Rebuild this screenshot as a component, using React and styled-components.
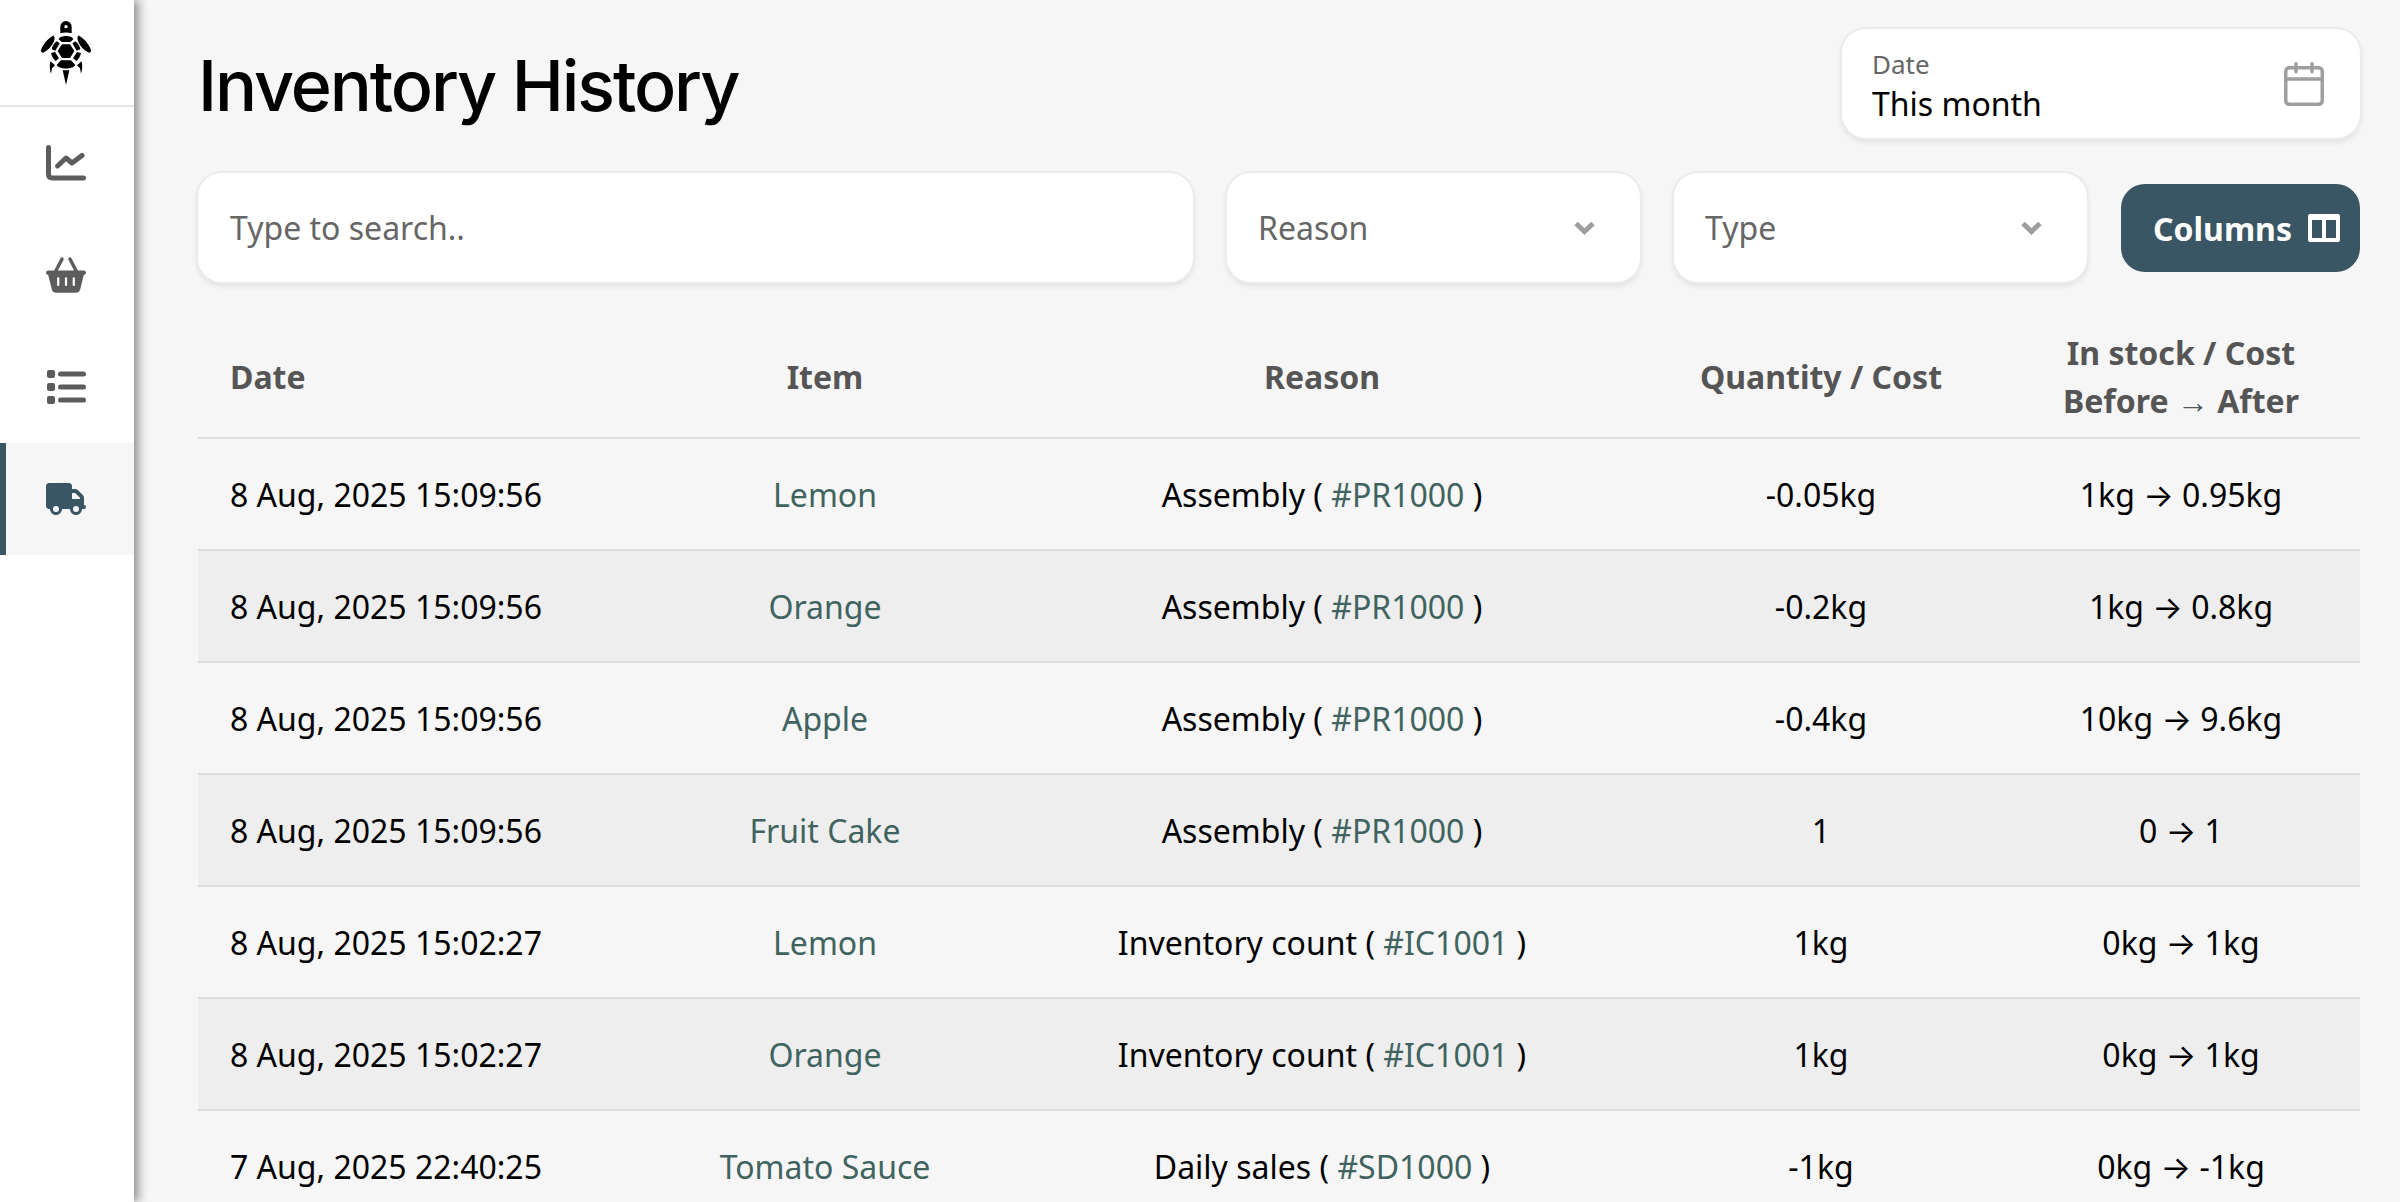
import React from "react";
import styled, { createGlobalStyle } from "styled-components";
import { FaBasketShopping, FaTruck } from "react-icons/fa6";

const GlobalStyle = createGlobalStyle`
  html, body {
    margin: 0;
    height: 100%;
    overflow: hidden;
    background: #f6f6f6;
    font-family: "Noto Sans", sans-serif;
  }
  * { box-sizing: border-box; }
`;

const Layout = styled.div`
  display: flex;
  height: 100vh;
  overflow: hidden;
`;

const Sidebar = styled.nav`
  flex: 0 0 134px;
  background: #fff;
  box-shadow: 4px 0 10px rgba(0, 0, 0, 0.45);
  z-index: 1;
`;

const LogoBox = styled.div`
  height: 107px;
  padding-right: 2px;
  display: flex;
  align-items: center;
  justify-content: center;
  border-bottom: 2px solid #e6e6e6;
`;

const NavItem = styled.div`
  height: 112px;
  display: flex;
  align-items: center;
  justify-content: center;
  font-size: 40px;
  color: ${({ $active }) => ($active ? "#3a5664" : "#5c5c5c")};
  background: ${({ $active }) => ($active ? "#f6f6f6" : "transparent")};
  border-left: ${({ $active }) => ($active ? "6px solid #3a5664" : "0")};
  padding-right: ${({ $active }) => ($active ? "8px" : "2px")};
`;

const Main = styled.main`
  flex: 1;
  min-width: 0;
  padding: 29px 40px 0 64px;
`;

const Header = styled.header`
  display: flex;
  justify-content: space-between;
  align-items: center;
  height: 109px;
`;

const Title = styled.h1`
  margin: 4px 0 0;
  font-family: "Inter", sans-serif;
  font-size: 70px;
  font-weight: 450;
  letter-spacing: -0.03em;
  color: #000;
`;

const Card = styled.div`
  background: #fff;
  border-radius: 24px;
  box-shadow: 0 0 0 2px #ebebeb, 0 3px 6px rgba(0, 0, 0, 0.12);
`;

const DateCard = styled(Card)`
  width: 518px;
  height: 109px;
  padding: 0 36px 0 30px;
  display: flex;
  align-items: center;
  justify-content: space-between;
`;

const DateText = styled.div`
  padding-top: 5px;
`;

const DateLabel = styled.div`
  font-size: 26px;
  line-height: 34px;
  color: #666;
`;

const DateValue = styled.div`
  font-size: 32px;
  line-height: 45px;
  color: #000;
`;

const Filters = styled.div`
  display: flex;
  align-items: flex-start;
  gap: 34px;
  margin-top: 35px;
`;

const Search = styled(Card)`
  flex: 1;
  height: 109px;
  padding: 0 32px;
  display: flex;
  align-items: center;
  font-size: 32px;
  color: #666;
`;

const Select = styled(Card)`
  flex: 0 0 413px;
  height: 109px;
  padding: 0 45px 0 31px;
  display: flex;
  align-items: center;
  justify-content: space-between;
  font-size: 32px;
  color: #666;
`;

const ColumnsButton = styled.button`
  flex: 0 0 239px;
  height: 88px;
  margin-top: 11px;
  border: 0;
  border-radius: 24px;
  background: #3a5664;
  color: #fff;
  font-family: inherit;
  font-size: 32px;
  font-weight: 700;
  display: flex;
  align-items: center;
  justify-content: space-between;
  padding: 0 20px 0 32px;
`;

const Table = styled.table`
  width: 100%;
  margin-top: 34px;
  border-collapse: collapse;
  table-layout: fixed;
`;

const Th = styled.th`
  height: 122px;
  padding: 0 32px;
  font-size: 32px;
  line-height: 48px;
  font-weight: 700;
  color: #555;
  text-align: ${({ $left }) => ($left ? "left" : "center")};
  border-bottom: 2px solid #ddd;
`;

const Row = styled.tr`
  background: ${({ $alt }) => ($alt ? "#eeeeee" : "transparent")};
`;

const Td = styled.td`
  height: 112px;
  padding: 0 32px;
  font-size: 32px;
  color: #000;
  text-align: ${({ $left }) => ($left ? "left" : "center")};
  border-bottom: 2px solid #ddd;
`;

const ItemLink = styled.span`
  color: #3f6460;
`;

const Arrow = styled.span`
  font-family: "Inter", sans-serif;
`;

// turtle traced from the logo, top view
const Turtle = () => (
  <svg width="50" height="64" viewBox="0 0 150 192" fill="#000">
    <path fillRule="evenodd" d="M58 37V17a17 17 0 0 1 34 0v20c-10-3-24-3-34 0zM75 12a5 5 0 1 0 0 10 5 5 0 0 0 0-10z" />
    <path d="M53 55c4-13 40-13 44 0l-9 8H62z" />
    <path d="M63 70h24l13 20-13 21H63L50 90z" />
    <path d="M47 61l9 6-13 22-11-4c1-9 8-19 15-24z" />
    <path d="M103 61l-9 6 13 22 11-4c-1-9-8-19-15-24z" />
    <path d="M30 96l12-3 12 19-10 8c-7-5-12-15-14-24z" />
    <path d="M120 96l-12-3-12 19 10 8c7-5 12-15 14-24z" />
    <path d="M60 118h30l13 14c-8 14-48 14-56 0z" />
    <path d="M36 44C20 52 4 72 0 88c0 7 6 9 10 5 14-7 26-22 30-36 2-7-1-15-4-13z" />
    <path d="M114 44c16 8 32 28 36 44 0 7-6 9-10 5-14-7-26-22-30-36-2-7 1-15 4-13z" />
    <path d="M28 121l14 12-9 9-3 16c-4-11-5-24-2-37z" />
    <path d="M122 121l-14 12 9 9 3 16c4-11 5-24 2-37z" />
    <path d="M65 148h20l-10 44z" />
  </svg>
);

const ChartIcon = () => (
  <svg width="40" height="36" viewBox="0 0 40 36" fill="none" stroke="currentColor" strokeWidth="5" strokeLinecap="round" strokeLinejoin="round">
    <path d="M2.500 2.500V29q0 4 4 4H37.500" />
    <path d="M11.500 21L20 13l6 5L36 10.500" />
  </svg>
);

const ListIcon = () => (
  <svg width="40" height="34" viewBox="0 0 40 34" fill="currentColor">
    <rect x="1" y="0" width="8" height="8" rx="2" />
    <rect x="1" y="13" width="8" height="8" rx="2" />
    <rect x="1" y="26" width="8" height="8" rx="2" />
    <rect x="12" y="1.500" width="28" height="5" rx="2.500" />
    <rect x="12" y="14.500" width="28" height="5" rx="2.500" />
    <rect x="12" y="27.500" width="28" height="5" rx="2.500" />
  </svg>
);

const CalendarIcon = () => (
  <svg width="40" height="44" viewBox="0 0 40 44" fill="none" stroke="#9e9e9e" strokeWidth="3.500" strokeLinecap="round">
    <rect x="1.750" y="5.750" width="36.500" height="36.500" rx="3.500" />
    <path d="M1.750 17h36.500M12 1.750v8M28 1.750v8" />
  </svg>
);

const ChevronIcon = () => (
  <svg width="21" height="14" viewBox="0 0 21 14" fill="none" stroke="#9e9e9e" strokeWidth="5">
    <path d="M2 2.500l8.500 8 8.500-8" />
  </svg>
);

const ColumnsIcon = () => (
  <svg width="32" height="28" viewBox="0 0 32 28">
    <path fill="#fff" fillRule="evenodd" d="M2 0h28a2 2 0 0 1 2 2v24a2 2 0 0 1-2 2H2a2 2 0 0 1-2-2V2a2 2 0 0 1 2-2zM4 6v18h10V6zM18 6v18h10V6z" />
  </svg>
);

const rows = [
  ["8 Aug, 2025 15:09:56", "Lemon", "Assembly", "#PR1000", "-0.05kg", "1kg", "0.95kg"],
  ["8 Aug, 2025 15:09:56", "Orange", "Assembly", "#PR1000", "-0.2kg", "1kg", "0.8kg"],
  ["8 Aug, 2025 15:09:56", "Apple", "Assembly", "#PR1000", "-0.4kg", "10kg", "9.6kg"],
  ["8 Aug, 2025 15:09:56", "Fruit Cake", "Assembly", "#PR1000", "1", "0", "1"],
  ["8 Aug, 2025 15:02:27", "Lemon", "Inventory count", "#IC1001", "1kg", "0kg", "1kg"],
  ["8 Aug, 2025 15:02:27", "Orange", "Inventory count", "#IC1001", "1kg", "0kg", "1kg"],
  ["7 Aug, 2025 22:40:25", "Tomato Sauce", "Daily sales", "#SD1000", "-1kg", "0kg", "-1kg"],
];

export default function App() {
  return (
    <Layout>
      <GlobalStyle />
      <Sidebar>
        <LogoBox>
          <Turtle />
        </LogoBox>
        <NavItem><ChartIcon /></NavItem>
        <NavItem><FaBasketShopping /></NavItem>
        <NavItem><ListIcon /></NavItem>
        <NavItem $active><FaTruck /></NavItem>
      </Sidebar>
      <Main>
        <Header>
          <Title>Inventory History</Title>
          <DateCard>
            <DateText>
              <DateLabel>Date</DateLabel>
              <DateValue>This month</DateValue>
            </DateText>
            <CalendarIcon />
          </DateCard>
        </Header>
        <Filters>
          <Search>Type to search..</Search>
          <Select>Reason<ChevronIcon /></Select>
          <Select>Type<ChevronIcon /></Select>
          <ColumnsButton>Columns<ColumnsIcon /></ColumnsButton>
        </Filters>
        <Table>
          <colgroup>
            <col width="448" />
            <col width="358" />
            <col width="636" />
            <col width="362" />
            <col width="358" />
          </colgroup>
          <thead>
            <tr>
              <Th $left>Date</Th>
              <Th>Item</Th>
              <Th>Reason</Th>
              <Th>Quantity / Cost</Th>
              <Th>In stock / Cost<br />Before → After</Th>
            </tr>
          </thead>
          <tbody>
            {rows.map((row, index) => (
              <Row key={index} $alt={index % 2 === 1}>
                <Td $left>{row[0]}</Td>
                <Td><ItemLink>{row[1]}</ItemLink></Td>
                <Td>{row[2]} ( <ItemLink>{row[3]}</ItemLink> )</Td>
                <Td>{row[4]}</Td>
                <Td>{row[5]} <Arrow>→</Arrow> {row[6]}</Td>
              </Row>
            ))}
          </tbody>
        </Table>
      </Main>
    </Layout>
  );
}
